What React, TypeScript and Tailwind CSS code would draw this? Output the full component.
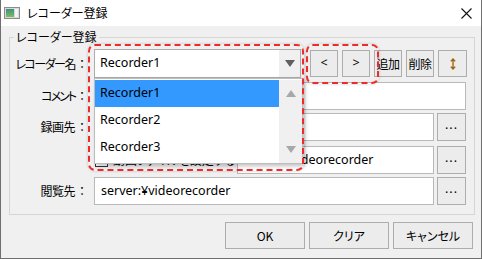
const jp = "font-['Noto_Sans_CJK_JP','Noto_Sans',sans-serif] [font-feature-settings:'palt'] text-[12px]";
const ui = "font-['Noto_Sans','Noto_Sans_CJK_JP',sans-serif] text-[12.5px]";

function WindowIcon() {
  return (
    <svg width="16" height="12" viewBox="0 0 16 12" className="shrink-0">
      <defs>
        <linearGradient id="ic" x1="0" y1="0" x2="0" y2="1">
          <stop offset="0" stopColor="#3c8f8a" />
          <stop offset="1" stopColor="#7fbf5a" />
        </linearGradient>
      </defs>
      <rect x="0.5" y="0.5" width="15" height="11" fill="#d8d8d8" stroke="#8c8c8c" />
      <rect x="2" y="2" width="8" height="8" fill="url(#ic)" />
      <rect x="11" y="2" width="3" height="8" fill="#f4f4f4" />
    </svg>
  );
}

function Btn({ children, className = "" }: { children: React.ReactNode; className?: string }) {
  return (
    <div
      className={`flex items-center justify-center bg-[#ececec] border border-[#adadad] ${className}`}
    >
      {children}
    </div>
  );
}

function TextBox({ value = "", className = "" }: { value?: string; className?: string }) {
  return (
    <div className={`h-[28px] bg-white border border-[#b9b9b9] flex items-center pl-[6px] ${ui} ${className}`}>
      {value}
    </div>
  );
}

// right-aligned caption with a full-width colon column
function Label({ text, tight = "" }: { text: string; tight?: string }) {
  return (
    <div className={`w-[78px] shrink-0 flex justify-end items-center ${jp}`}>
      <span className={`mr-[1px] whitespace-nowrap shrink-0 ${tight}`}>{text}</span>
      <span className="w-[12px] shrink-0 text-center [font-feature-settings:normal]">：</span>
    </div>
  );
}

function Tri({ up = false, color }: { up?: boolean; color: string }) {
  return (
    <svg width="10" height="7" viewBox="0 0 10 7">
      <polygon points={up ? "5,0 10,7 0,7" : "0,0 10,0 5,7"} fill={color} />
    </svg>
  );
}

function Dots() {
  return <span className={`${ui} -mt-[4px] tracking-[1px]`}>...</span>;
}

export default function App() {
  return (
    <div className="relative w-[482px] h-[259px] bg-[#f0f0f0] border-x border-b border-[#6f6f6f] flex flex-col overflow-hidden text-black">
      {/* title bar */}
      <div className="h-[26px] bg-white flex items-center pl-[3px] pr-[9px] shrink-0">
        <WindowIcon />
        <span className={`ml-[7px] ${jp}`}>レコーダー登録</span>
        <svg width="11" height="11" viewBox="0 0 11 11" className="ml-auto">
          <path d="M0.5 0.5 L10.5 10.5 M10.5 0.5 L0.5 10.5" stroke="#111" strokeWidth="1.1" />
        </svg>
      </div>

      {/* group box */}
      <fieldset className="ml-[8px] mr-[6px] mt-[4px] border border-[#d5d5d5] pt-[5px] pb-[9px]">
        <legend className={`ml-[4px] px-[2px] leading-[14px] ${jp}`}>レコーダー登録</legend>

        {/* recorder name */}
        <div className="flex items-center h-[29px]">
          <Label text="レコーダー名" tight="tracking-[-1.5px]" />
          <div className="relative ml-[6px] w-[207px] h-[29px]">
            <div className="h-full bg-white border border-[#adadad] flex">
              <div className={`flex-1 flex items-center pl-[5px] ${ui}`}>Recorder1</div>
              <div className="w-[21px] bg-[#f0f0f0] flex items-center justify-center">
                <Tri color="#606060" />
              </div>
            </div>
            {/* open drop-down list */}
            <div className="absolute left-0 top-full z-10 w-[209px] h-[86px] bg-white border border-[#bdbdbd] shadow-[2px_2px_4px_rgba(0,0,0,0.25)] flex pt-[1px]">
              <div className={`flex-1 ${ui}`}>
                <div className="h-[27px] bg-[#3399ff] flex items-center pl-[5px]">Recorder1</div>
                <div className="h-[27px] flex items-center pl-[5px]">Recorder2</div>
                <div className="h-[27px] flex items-center pl-[5px]">Recorder3</div>
              </div>
              <div className="w-[23px] bg-[#f0f0f0] flex flex-col items-center justify-between py-[10px]">
                <Tri up color="#a8a8a8" />
                <Tri color="#a8a8a8" />
              </div>
            </div>
          </div>
          <Btn className={`ml-[9px] w-[28px] h-[27px] ${ui}`}>&lt;</Btn>
          <Btn className={`ml-[4px] w-[28px] h-[27px] ${ui}`}>&gt;</Btn>
          <Btn className={`ml-[4px] w-[28px] h-[27px] ${jp} tracking-[-0.5px]`}>追加</Btn>
          <Btn className={`ml-[4px] w-[28px] h-[27px] ${jp} tracking-[-0.5px]`}>削除</Btn>
          <Btn className="ml-[4px] w-[29px] h-[27px]">
            <svg width="6" height="12" viewBox="0 0 6 12">
              <path d="M3 1 V11 M0.8 3.4 L3 1 L5.2 3.4 M0.8 8.6 L3 11 L5.2 8.6" stroke="#a05f00" strokeWidth="1.3" fill="none" />
            </svg>
          </Btn>
        </div>

        {/* comment */}
        <div className="flex items-center h-[28px] mt-[4px]">
          <Label text="コメント" tight="tracking-[-2px]" />
          <TextBox className="ml-[6px] w-[372px]" />
        </div>

        {/* record to */}
        <div className="flex items-center h-[28px] mt-[3px]">
          <Label text="録画先" tight="tracking-[-0.5px]" />
          <TextBox className="ml-[6px] w-[340px]" />
          <Btn className="ml-[3px] w-[29px] h-[28px]"><Dots /></Btn>
        </div>

        {/* video file */}
        <div className="flex items-center h-[28px] mt-[5px]">
          <div className="w-[78px]" />
          <div className={`ml-[6px] w-[143px] flex items-center pl-[1px] ${jp}`}>
            <span className="w-[13px] h-[13px] bg-white border border-[#333] shrink-0" />
            <span className="ml-[5px] whitespace-nowrap">動画ファイルを設定する</span>
          </div>
          <TextBox value="server:¥videorecorder" className="w-[197px]" />
          <Btn className="ml-[3px] w-[29px] h-[28px]"><Dots /></Btn>
        </div>

        {/* browse */}
        <div className="flex items-center h-[28px] mt-[3px]">
          <Label text="閲覧先" tight="tracking-[-0.5px]" />
          <TextBox value="server:¥videorecorder" className="ml-[6px] w-[340px]" />
          <Btn className="ml-[3px] w-[29px] h-[28px]"><Dots /></Btn>
        </div>
      </fieldset>

      {/* dialog buttons */}
      <div className={`flex justify-end gap-[4px] mt-[7px] mr-[8px] ${jp}`}>
        <Btn className="w-[80px] h-[27px]">OK</Btn>
        <Btn className="w-[80px] h-[27px]">クリア</Btn>
        <Btn className="w-[80px] h-[27px]">キャンセル</Btn>
      </div>

      {/* annotation marks */}
      <div className="absolute left-[87px] top-[44px] w-[216px] h-[127px] z-20 border-2 border-dashed border-[#ee2a2a] rounded-[7px] shadow-[0_0_3px_rgba(0,0,0,0.2)]" />
      <div className="absolute left-[305px] top-[44px] w-[73px] h-[40px] z-20 border-2 border-dashed border-[#ee2a2a] rounded-[7px] shadow-[0_0_3px_rgba(0,0,0,0.2)]" />
    </div>
  );
}
